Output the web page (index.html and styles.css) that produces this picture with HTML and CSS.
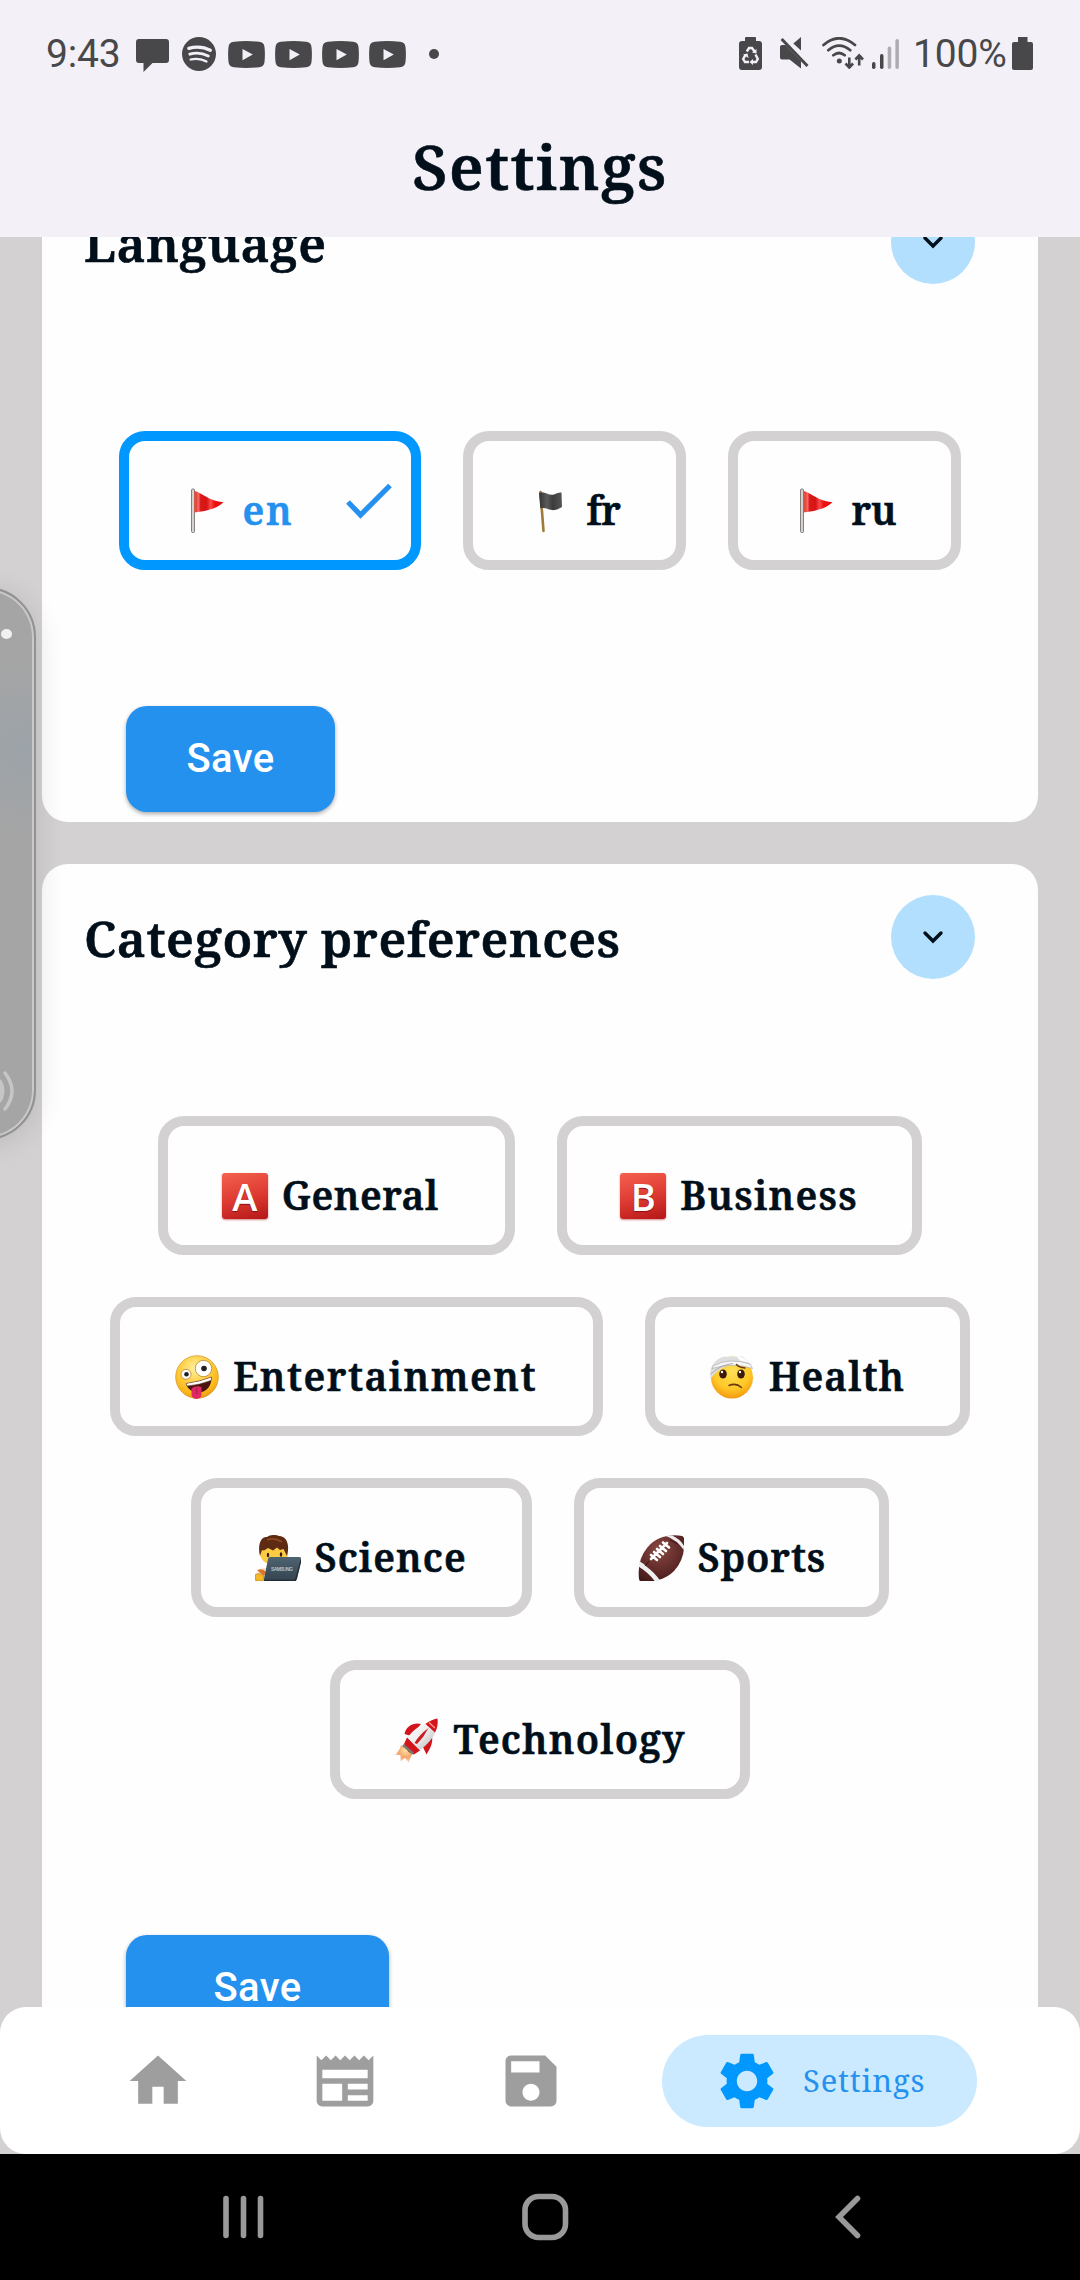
FILE: index.html
```html
<!DOCTYPE html>
<html lang="en">
<head>
<meta charset="utf-8">
<title>Settings</title>
<link rel="stylesheet" href="styles.css">
</head>
<body>
<svg width="0" height="0" class="defs" aria-hidden="true">
  <defs>
    <linearGradient id="red-cloth" x1="0" x2="1" y1="0" y2="0">
      <stop offset="0" stop-color="#e2533f"/><stop offset=".08" stop-color="#e04a3a"/><stop offset=".14" stop-color="#ff6a6a"/><stop offset=".22" stop-color="#d81a1a"/><stop offset=".42" stop-color="#d81414"/><stop offset=".56" stop-color="#fb4848"/><stop offset=".7" stop-color="#ee1010"/><stop offset="1" stop-color="#e80c0c"/>
    </linearGradient>
    <linearGradient id="black-cloth" x1="0" x2="1"><stop offset="0" stop-color="#333"/><stop offset=".35" stop-color="#5b5b5b"/><stop offset=".6" stop-color="#3c3c3c"/><stop offset="1" stop-color="#555"/></linearGradient>
    <radialGradient id="face" cx=".45" cy=".3" r=".75"><stop offset="0" stop-color="#fff0a0"/><stop offset=".45" stop-color="#fdd045"/><stop offset=".8" stop-color="#fbb516"/><stop offset="1" stop-color="#e08a12"/></radialGradient>
    <radialGradient id="face-deep" cx=".5" cy=".35" r=".7"><stop offset="0" stop-color="#ffdf55"/><stop offset=".6" stop-color="#fec928"/><stop offset=".88" stop-color="#f6a013"/><stop offset="1" stop-color="#d87c18"/></radialGradient>
    <radialGradient id="leather" cx=".45" cy=".3" r=".75"><stop offset="0" stop-color="#8a4a44"/><stop offset=".5" stop-color="#69302d"/><stop offset="1" stop-color="#431a19"/></radialGradient>
    <linearGradient id="laptop" x1="0" y1="0" x2="0" y2="1"><stop offset="0" stop-color="#4f6371"/><stop offset="1" stop-color="#34444f"/></linearGradient>
    <linearGradient id="hull" x1="0" y1="0" x2="1" y2="1"><stop offset="0" stop-color="#fff"/><stop offset=".5" stop-color="#eee"/><stop offset="1" stop-color="#aaa"/></linearGradient>
    <radialGradient id="flame" cx=".6" cy=".3" r=".7"><stop offset="0" stop-color="#ffe6a0"/><stop offset=".6" stop-color="#f4a46a"/><stop offset="1" stop-color="#f0a880" stop-opacity=".5"/></radialGradient>
    <symbol id="flag-red" viewBox="0 0 46 46">
      <rect x="8.6" y="1" width="2.8" height="43.5" rx="1" fill="#ddd" stroke="#7b7370" stroke-width="1"/>
      <path d="M11.2 2.8C19 4.5 26 13.6 40.5 14.2 34 20.5 23 23.4 11.2 24.4Z" fill="url(#red-cloth)"/>
    </symbol>
    <symbol id="youtube" viewBox="0 0 37 27">
      <path fill="#48484a" d="M6 .7Q18.500-.7 31 .7 36 1 36.500 6 37.300 13.500 36.500 21 36 26 31 26.300 18.500 27.700 6 26.300 1 26 .5 21-.3 13.500.5 6 1 1 6 .7Z"/>
      <path fill="#f3f0f7" d="m14.500 8 10.300 5.500-10.300 5.700Z"/>
    </symbol>
  </defs>
</svg>

<div class="screen">
  <header class="top">
    <div class="status">
      <span class="clock">9:43</span>
      <svg class="chat" viewBox="0 0 33 33"><path fill="#48484a" d="M3 0H30Q33 0 33 3V21Q33 24 30 24H16.500L7.500 33V24H3Q0 24 0 21V3Q0 0 3 0Z"/></svg>
      <svg class="spotify" viewBox="0 0 34 34"><circle cx="17" cy="17" r="17" fill="#48484a"/><g fill="none" stroke="#f3f0f7" stroke-linecap="round"><path stroke-width="3.300" d="M6.800 11.300Q18.500 8 28.300 13.300"/><path stroke-width="2.800" d="M7.800 17.200Q17.500 14.500 26.300 19"/><path stroke-width="2.300" d="M8.600 22.500Q17.500 20.500 24.500 24.500"/></g></svg>
      <div class="videos">
        <svg><use href="#youtube"/></svg><svg><use href="#youtube"/></svg><svg><use href="#youtube"/></svg><svg><use href="#youtube"/></svg>
      </div>
      <i class="more"></i>
      <svg class="recycle" viewBox="0 0 23 33"><path fill="#48484a" d="M6 1Q6 0 7 0H16Q17 0 17 1V4H20Q23 4 23 7V30Q23 33 20 33H3Q0 33 0 30V7Q0 4 3 4H6Z"/><g fill="none" stroke="#f3f0f7" stroke-width="2.400"><path d="M7.800 14.500 10 11H13L15.500 14.500M16.500 17.500 18.800 22 17 25H13.500M10 25H6L4.200 22 6.500 17.800"/></g><path fill="#f3f0f7" d="m13 15.500 4.500 1V12ZM14 22v6l-3.500-3ZM4 17.500l4.500-1L9.500 21Z"/></svg>
      <svg class="mute" viewBox="0 0 29 32"><path fill="#48484a" d="M0 10Q0 8 2 8H5.500L21 24V31.500L9.500 22.500H2Q0 22.500 0 20.500ZM21 0V13.500L13.300 6.500Z"/><path stroke="#48484a" stroke-width="3" d="M1.600 2 27.500 29"/></svg>
      <svg class="wifi" viewBox="0 0 42 32"><g fill="none" stroke="#48484a" stroke-width="2.700" stroke-linecap="round"><path d="M1.500 8Q17-5.500 33 8M6.300 13.200Q17 4 28.300 13.200M11.300 18.200Q17 13.800 22.700 18.200"/></g><circle cx="17.300" cy="24" r="2.500" fill="#48484a"/><path fill="none" stroke="#48484a" stroke-width="2.600" d="M27.300 20.500v9M23.500 26.500l3.800 4 3.800-4M37.200 28.500v-9M33.400 22.500l3.800-4 3.800 4"/></svg>
      <svg class="signal" viewBox="0 0 27 30"><g fill="#48484a"><rect y="23" width="3.500" height="7" rx="1.700"/><rect x="8" y="15" width="3.500" height="15" rx="1.700"/><g opacity=".4"><rect x="15.700" y="7.500" width="3.500" height="22.500" rx="1.700"/><rect x="23.400" width="3.500" height="30" rx="1.700"/></g></g></svg>
      <span class="percent">100%</span>
      <svg class="battery" viewBox="0 0 21 33"><path fill="#48484a" d="M6 0H15.500V5H6ZM2 5H19Q21 5 21 7V31Q21 33 19 33H2Q0 33 0 31V7Q0 5 2 5Z"/></svg>
    </div>
    <h1>Settings</h1>
  </header>

  <main class="content">
    <section class="card language">
      <div class="card-head"><h2>Language</h2><button class="toggle" aria-label="Collapse"><svg viewBox="0 0 22 14"><path d="m3 3 8 8 8-8"/></svg></button></div>
      <div class="chips">
        <div class="chip active c-en"><svg class="emoji"><use href="#flag-red"/></svg><span>en</span>
          <svg class="check" viewBox="0 0 46 36"><path d="m2 19 12.500 13L44 2.500"/></svg></div>
        <div class="chip c-fr"><svg class="emoji" viewBox="0 0 46 46"><path d="M13.500 4 16.500 43" stroke="#a07a36" stroke-width="2.600" stroke-linecap="round"/><path d="M12 5C17 2 21 8 27 6.500Q32 4 34.500 4.500L35 19Q32 21 28 22C22 23 19 18.500 13.300 20.500Z" fill="url(#black-cloth)"/></svg><span>fr</span></div>
        <div class="chip c-ru"><svg class="emoji"><use href="#flag-red"/></svg><span>ru</span></div>
      </div>
      <button class="save">Save</button>
    </section>

    <section class="card category">
      <div class="card-head"><h2>Category preferences</h2><button class="toggle" aria-label="Collapse"><svg viewBox="0 0 22 14"><path d="m3 3 8 8 8-8"/></svg></button></div>
      <div class="chips">
        <div class="chip c-general"><b class="emoji blood">A</b><span>General</span></div>
        <div class="chip c-business"><b class="emoji blood">B</b><span>Business</span></div>
        <div class="chip c-entertainment"><svg class="emoji" viewBox="0 0 46 46">
          <circle cx="24" cy="23" r="21.300" fill="url(#face)" stroke="#dc9a28" stroke-width=".8"/>
          <circle cx="30.500" cy="14.500" r="8.200" fill="#fff" stroke="#b98324" stroke-width=".8"/><circle cx="31" cy="14.500" r="2.800" fill="#222"/>
          <circle cx="13" cy="20.300" r="5" fill="#fff" stroke="#b98324" stroke-width=".8"/><circle cx="13.500" cy="20.300" r="2.300" fill="#222"/>
          <path d="M13 29.500Q27 27.500 38.500 23C38.800 32 33.500 38 26 38.500 19 38.500 14.500 35 13 29.500Z" fill="#49140e"/><path d="M13 29.500Q27 27.500 38.500 23L38.300 26.300Q27 31 14 32Z" fill="#fff" stroke="#5a2410" stroke-width=".5"/>
          <path d="M18.500 34.500Q23 31 28.500 33V40C28.500 46.500 18.500 46.500 18.500 40Z" fill="#df2764"/><path d="M23.700 34v6" stroke="#a9164a"/></svg><span>Entertainment</span></div>
        <div class="chip c-health"><svg class="emoji" viewBox="0 0 46 46">
          <circle cx="23" cy="23.500" r="21" fill="url(#face-deep)"/>
          <path d="M1.500 25C-.5 14 5 6 14 2.800L33 2.500Q40 6.500 43 13.500L24 9.500Q9 14 1.500 25Z" fill="#dedede"/>
          <path d="M4 12Q20 3 41 10L43.500 14.500Q24 8 3 14.500Z" fill="#f7f7f7" stroke="#aaa" stroke-width=".7"/><path d="M1.800 20Q12 10.500 24 9.500" stroke="#999" stroke-width=".8" fill="none"/><path d="M27 1.500Q35 3 40 8.500L31 6.500Z" fill="#fff"/>
          <ellipse cx="14" cy="20" rx="3.800" ry="4.500" fill="#3a1a08"/><ellipse cx="32" cy="20" rx="3.800" ry="4.500" fill="#3a1a08"/><circle cx="13" cy="18" r="1.200" fill="#fff"/><circle cx="31" cy="18" r="1.200" fill="#fff"/>
          <path d="M27.500 10.500Q30 13.500 36 14M20 31.500Q27 28.500 32.500 33.500" stroke="#6b3812" stroke-width="1.500" fill="none" stroke-linecap="round"/></svg><span>Health</span></div>
        <div class="chip c-science"><svg class="emoji" viewBox="0 0 46 46">
          <path d="M0 46V40Q3 34 8 33L18 33V46Z" fill="#f3e4cf"/><path d="M2 35Q8 33 11 37L9 41Z" fill="#d8742c"/><path d="M0 40Q5 37 9 41L8 46H1Z" fill="#f5b92a" stroke="#c67d18" stroke-width=".7"/>
          <path d="M5 12Q3 26 14 29H30Q34 24 32 12Z" fill="#fbcb43"/>
          <path d="M5 21C2 8 7 1 12 2 15-.5 21-.5 24 1 32 1 35 10 32 21L30 17 28.500 14 25 15 22 12.500 18 15.500 13 13 9 15.500 7 15Z" fill="#5f2a12"/><path d="M12 5Q19 2 27 7" stroke="#8d4a25" stroke-width="1.500" fill="none"/>
          <ellipse cx="13" cy="20" rx="1.200" ry="2.300" fill="#3a1a08"/><ellipse cx="26" cy="19.500" rx="1.200" ry="2.300" fill="#3a1a08"/>
          <path d="M15 22H44Q47.500 22 46.500 25L42 44Q41.500 46 39 46H10Q8.500 46 9 44L13 24Q13.400 22 15 22Z" fill="url(#laptop)"/><path d="M9 45.300H40.500L46 25" stroke="#202b34" fill="none" stroke-width="1.200"/>
          <text x="16" y="36" class="brand" textLength="22">SAMSUNG</text></svg><span>Science</span></div>
        <div class="chip c-sports"><svg class="emoji" viewBox="0 0 46 46">
          <path d="M1 44Q-1 25 9 13C18 1 34-1 44 1Q47 2 46 8 47 24 36 36C26 46 11 48 2 46.500Z" fill="url(#leather)"/>
          <path d="M28 1Q39 5 45.800 15L46 11Q42 4 34 .6ZM1 26Q5 28 9 32 17 38 22 45.500L17 46.500Q11 38 .5 31.500Z" fill="#eee"/>
          <path d="M13 24 29 8M13 20l6 5M16 17l6 5M19 14l6 5M22 11l6 5M25 7.500l6 5" stroke="#fff" stroke-width="2.600" stroke-linecap="round"/><path d="M7 31 11 26M32 5 40 9" stroke="#341413"/></svg><span>Sports</span></div>
        <div class="chip c-technology"><svg class="emoji" viewBox="0 0 46 46">
          <path d="M7 28 19 36Q16 40 15 45.500L11 41 6.500 44.500 6.500 38 1 38Q6 33 7 28Z" fill="url(#flame)"/>
          <path d="M10.500 17C12 9 20 5 27 7L17 19ZM37.500 17C40 25 36 32 32.500 37.500L28 28Z" fill="#d3141a"/>
          <path d="M43.500 1.500C45 16 34 29 21 36L10.500 27Q16 10 43.500 1.500Z" fill="url(#hull)"/>
          <path d="M43.500 1.500Q44.500 9 41 15.500L31.500 7Q37 2.600 43.500 1.500ZM13 20.500 24 31.500 26 33.500 20 37.500 14.500 35 10 27Z" fill="#d3141a"/><path d="M35 5.500 41 11" stroke="#ff9b94" stroke-width="1.300"/>
          <path d="M20.500 26Q25 18 34.500 11 30 20 23 27Z" fill="#cc1c20"/><path d="M9 28 19 36.500" stroke="#7b7775" stroke-width="2.600"/></svg><span>Technology</span></div>
      </div>
      <button class="save wide">Save</button>
    </section>
  </main>

  <nav class="tabs">
    <a class="tab"><svg viewBox="0 0 24 24"><path d="M10 20v-6h4v6h5v-8h3L12 3 2 12h3v8z"/></svg></a>
    <a class="tab"><svg viewBox="0 0 24 24"><path d="m22 3-1.670 1.670L18.670 3 17 4.670 15.330 3l-1.660 1.670L12 3l-1.670 1.670L8.670 3 7 4.670 5.330 3 3.670 4.670 2 3v16c0 1.100.9 2 2 2h16c1.100 0 2-.9 2-2zM11 19H4v-6h7zm9 0h-7v-2h7zm0-4h-7v-2h7zm0-4H4V8h16z"/></svg></a>
    <a class="tab"><svg viewBox="0 0 24 24"><path d="M17 3H5c-1.110 0-2 .9-2 2v14c0 1.100.89 2 2 2h14c1.100 0 2-.9 2-2V7zm-5 16c-1.660 0-3-1.340-3-3s1.340-3 3-3 3 1.340 3 3-1.340 3-3 3m3-10H5V5h10z"/></svg></a>
    <a class="tab current"><svg viewBox="0 0 24 24"><path d="M19.140 12.940c.04-.3.060-.61.060-.94 0-.32-.02-.64-.07-.94l2.030-1.580c.18-.14.230-.41.120-.61l-1.920-3.320c-.12-.22-.37-.29-.59-.22l-2.390.96c-.5-.38-1.030-.7-1.620-.94l-.36-2.540c-.04-.24-.24-.41-.48-.41h-3.840c-.24 0-.43.170-.47.410l-.36 2.540c-.59.240-1.130.57-1.620.94l-2.390-.96c-.22-.08-.47 0-.59.220L2.740 8.870c-.12.210-.08.470.12.610l2.030 1.580c-.05.3-.09.630-.09.940s.02.640.07.940l-2.030 1.580c-.18.140-.23.410-.12.610l1.920 3.320c.12.220.37.290.59.220l2.390-.96c.5.380 1.030.7 1.620.94l.36 2.540c.05.240.24.410.48.410h3.840c.24 0 .44-.17.470-.41l.36-2.540c.59-.24 1.130-.56 1.620-.94l2.390.96c.22.080.47 0 .59-.22l1.920-3.320c.12-.22.070-.47-.12-.61zM12 15.600c-1.980 0-3.600-1.620-3.600-3.600s1.620-3.600 3.600-3.600 3.600 1.620 3.600 3.600-1.620 3.600-3.600 3.600"/></svg><span>Settings</span></a>
  </nav>

  <div class="system">
    <svg viewBox="0 0 42 48"><path d="M3 5.500v37M20.500 5.500v37M37.500 5.500v37"/></svg>
    <svg class="sys-home" viewBox="0 0 48 48"><rect x="4" y="3.500" width="40.500" height="41" rx="13.500"/></svg>
    <svg class="sys-back" viewBox="0 0 28 48"><path d="M23.500 5.500 5 24l18.500 18.500"/></svg>
  </div>

  <aside class="edge-panel">
    <i class="dot"></i>
    <svg viewBox="0 0 20 48"><ellipse cx="-3" cy="24" rx="7.500" ry="13" fill="#c6c6c6"/><path d="M5 6Q19 24 5 42" fill="none" stroke="#c6c6c6" stroke-width="3.500" stroke-linecap="round"/></svg>
  </aside>
</div>
</body>
</html>
```
FILE: styles.css
```css
* { box-sizing: border-box; }
body { margin: 0; }
button { border: 0; padding: 0; font: inherit; }
svg { display: block; flex: none; }
.defs { position: absolute; }

.screen {
  position: relative;
  display: flex;
  flex-direction: column;
  width: 1080px;
  height: 2280px;
  overflow: hidden;
  background: #d4d1d2;
  color: #000f1a;
  font-family: "Noto Serif", "Droid Serif", "DejaVu Serif Condensed", "DejaVu Serif", serif;
}

/* Status bar and title */
.top { flex: none; height: 237px; background: #f3f0f7; }
.status {
  display: flex;
  align-items: center;
  height: 106px;
  padding: 2px 0 0 46px;
  color: #48484a;
  font: 400 39px/46px Roboto, sans-serif;
}
.clock { width: 90px; letter-spacing: -.2px; }
.chat { width: 33px; height: 33px; margin-top: 2px; }
.spotify { width: 34px; height: 34px; margin-left: 13px; }
.videos { display: flex; gap: 10px; margin-left: 12px; }
.videos svg { width: 37px; height: 27px; }
.more { width: 10px; height: 10px; margin-left: 23px; border-radius: 50%; background: #48484a; }
.recycle { width: 23px; height: 33px; margin: -2px 0 0 300px; }
.mute { width: 29px; height: 32px; margin: -2px 0 0 18px; }
.wifi { width: 42px; height: 32px; margin: -2px 0 0 13px; }
.signal { width: 27px; height: 30px; margin: -1px 0 0 8px; }
.percent { width: 99px; margin-left: 14px; letter-spacing: -.2px; white-space: nowrap; }
.battery { width: 21px; height: 33px; margin-top: -2px; }
h1, h2, .chip span { -webkit-text-stroke: .6px currentColor; }
h1 { margin: 16px 0 0; text-align: center; font-size: 62px; line-height: 88px; font-weight: 600; letter-spacing: 1.6px; }
h2 { margin: 1px 0 0; font-size: 49.8px; line-height: 84px; font-weight: 600; letter-spacing: .5px; white-space: nowrap; }

/* Cards */
.content { flex: none; height: 1770px; padding: 0 42px; overflow: hidden; }
.card { padding-top: 31px; border-radius: 26px; background: #fefefe; }
.language { height: 653px; margin-top: -68px; }
.category { height: 1300px; margin-top: 42px; }
.card-head { display: flex; justify-content: space-between; height: 84px; padding: 0 63px 0 42px; }
.toggle { display: grid; place-items: center; width: 84px; height: 84px; border-radius: 50%; background: #b3dfff; }
.toggle svg { width: 22px; height: 14px; fill: none; stroke: #000f1a; stroke-width: 3.4; stroke-linecap: round; }
.chips { display: flex; flex-wrap: wrap; justify-content: center; gap: 42.2px 42px; width: 896px; margin: 137px auto 136px; }
.language .chips { margin-top: 147px; }

.chip {
  display: flex;
  align-items: flex-start;
  height: 139px;
  padding-left: 53.5px;
  border: 10px solid #d4d1d2;
  border-radius: 26px;
  font-size: 39px;
  line-height: 50px;
  font-weight: 600;
  white-space: nowrap;
}
.chip.active { border-color: #0098ff; color: #2491ef; }
.chip span { margin: 44px 0 0 14px; }
.emoji { flex: none; width: 46px; height: 46px; margin-top: 47px; }
.blood {
  border-radius: 3px;
  background: linear-gradient(165deg, #f4614f, #df3c33 50%, #b41618);
  box-shadow: 0 1px 2px #b4161880;
  color: #fff;
  font: 600 38px/46px "Open Sans", sans-serif;
  letter-spacing: 0;
  text-align: center;
  text-shadow: 0 1px 1px #8d0e10;
}
.brand { fill: #b4c0c8; font: 700 5px/1 "Liberation Sans", sans-serif; letter-spacing: 0; }
.check { width: 46px; height: 36px; margin: 42px 0 0 auto; fill: none; stroke: #2491ef; stroke-width: 5.2; }
.c-en { width: 302px; padding-right: 19px; letter-spacing: 1.8px; }
.c-fr { width: 223px; letter-spacing: -.5px; }
.c-ru { width: 233px; }
.c-general { width: 356.5px; letter-spacing: .5px; }
.c-business { width: 365px; letter-spacing: 1.3px; }
.c-entertainment { width: 493.5px; letter-spacing: 1.5px; }
.c-health { width: 325px; letter-spacing: 1.1px; }
.c-science { width: 341px; letter-spacing: 1.1px; }
.c-sports { width: 315px; letter-spacing: .9px; }
.c-technology { width: 420px; letter-spacing: 1.2px; }

.save {
  display: block;
  width: 209px;
  height: 105.5px;
  margin-left: 84px;
  border-radius: 21px;
  background: #2491ef;
  box-shadow: 0 2px 4px #0005;
  color: #fff;
  font: 500 40px/103px Roboto, sans-serif;
  letter-spacing: .4px;
}
.save.wide { width: 263px; }

/* Tab bar */
.tabs {
  display: flex;
  flex: none;
  align-items: center;
  gap: 118.5px;
  height: 147px;
  padding: 1px 0 0 124px;
  border-radius: 26px;
  background: #fff;
}
.tab svg { width: 68px; height: 68px; fill: #9e9e9e; }
.current {
  display: flex;
  align-items: center;
  width: 315px;
  height: 92px;
  margin-left: -21.5px;
  padding-left: 51px;
  border-radius: 46px;
  background: #cceaff;
  color: #2491ef;
  font-size: 31px;
  letter-spacing: .8px;
}
.current svg { fill: #0098ff; }
.current span { margin: -2px 0 0 22px; line-height: 40px; }

/* System navigation */
.system {
  display: flex;
  flex: none;
  align-items: center;
  height: 126px;
  padding-left: 223px;
  background: #000;
  fill: none;
  stroke: #999;
  stroke-width: 5.6;
  stroke-linecap: round;
}
.system svg { width: 42px; height: 48px; margin-bottom: 1px; }
.system .sys-home { width: 48px; margin-left: 256px; }
.system .sys-back { width: 28px; margin-left: 265px; }

/* Floating edge panel that overlaps the page */
.edge-panel {
  position: absolute;
  top: 587px;
  left: -81px;
  width: 117px;
  height: 553px;
  border: 2px solid #929292;
  border-radius: 50px;
  background: radial-gradient(circle at 105px 160px, #9ca3a9, #9ca3a900 90px), #a5a5a5;
  box-shadow: inset 0 0 0 2px #c9c9c9, 2px 4px 28px #0000001c;
}
.edge-panel .dot { position: absolute; left: 80px; top: 40px; width: 11px; height: 10px; border-radius: 50%; background: #f1f1f1; }
.edge-panel svg { position: absolute; left: 79px; top: 478px; width: 20px; height: 48px; overflow: hidden; }
```
